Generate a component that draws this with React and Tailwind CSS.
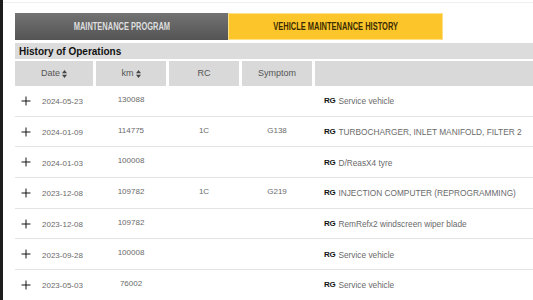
import { Plus } from "lucide-react";

const rows = [
  { date: "2024-05-23", km: "130088", rc: "", symptom: "", desc: "Service vehicle" },
  { date: "2024-01-09", km: "114775", rc: "1C", symptom: "G138", desc: "TURBOCHARGER, INLET MANIFOLD, FILTER 2" },
  { date: "2024-01-03", km: "100008", rc: "", symptom: "", desc: "D/ReasX4 tyre" },
  { date: "2023-12-08", km: "109782", rc: "1C", symptom: "G219", desc: "INJECTION COMPUTER (REPROGRAMMING)" },
  { date: "2023-12-08", km: "109782", rc: "", symptom: "", desc: "RemRefx2 windscreen wiper blade" },
  { date: "2023-09-28", km: "100008", rc: "", symptom: "", desc: "Service vehicle" },
  { date: "2023-05-03", km: "76002", rc: "", symptom: "", desc: "Service vehicle" },
];

function SortIcon() {
  return (
    <svg width="5" height="8" viewBox="0 0 5 8" className="ml-[2px] inline-block">
      <path d="M2.5 0 L5 3.2 L0 3.2 Z" fill="#444" />
      <path d="M2.5 8 L5 4.8 L0 4.8 Z" fill="#444" />
    </svg>
  );
}

export default function App() {
  return (
    <div className="min-h-[300px] w-[533px] overflow-hidden bg-white border-l-[3px] border-[#1c1c1c] font-['Liberation_Sans',Arial,sans-serif]">
      <div className="h-[3px] border-b border-[#efefef]" />

      {/* Tabs */}
      <div className="mt-[10px] flex pl-[12px]">
        <div className="flex h-[27px] w-[213px] items-center justify-center bg-gradient-to-b from-[#737373] to-[#545454] text-[11px] font-bold text-[#dedede]">
          <span className="inline-block scale-x-[0.68] whitespace-nowrap">MAINTENANCE PROGRAM</span>
        </div>
        <div className="flex h-[27px] w-[215px] items-center justify-center border border-[#fde08a] bg-[#fcc62b] text-[11px] font-bold text-[#3b2c00]">
          <span className="inline-block scale-x-[0.68] whitespace-nowrap">VEHICLE MAINTENANCE HISTORY</span>
        </div>
      </div>

      {/* Section title */}
      <div className="mt-[3px] ml-[12px] flex h-[16px] items-center bg-[#dcdcdc] pl-[4px] text-[10px] font-bold text-[#111]">
        History of Operations
      </div>

      {/* Table */}
      <div className="ml-[12px] mt-[2px]">
        <div className="grid h-[25px] grid-cols-[78px_70px_70px_70px_1fr] gap-x-[3px] text-[9px] text-[#555]">
          <div className="flex items-center justify-center bg-[#d9d9d9]">
            Date<SortIcon />
          </div>
          <div className="flex items-center justify-center bg-[#d9d9d9]">
            km<SortIcon />
          </div>
          <div className="flex items-center justify-center bg-[#d9d9d9]">RC</div>
          <div className="flex items-center justify-center bg-[#d9d9d9]">Symptom</div>
          <div className="bg-[#d9d9d9]" />
        </div>

        {rows.map((r, i) => (
          <div
            key={i}
            className="grid h-[30.7px] grid-cols-[78px_70px_70px_70px_1fr] gap-x-[3px] border-b border-[#e4e4e4] text-[8px] text-[#6a6a6a]"
          >
            <div className="flex items-center pl-[4px]">
              <Plus className="h-[14px] w-[14px] text-[#111]" strokeWidth={1.7} />
              <span className="ml-[9px] pt-[3px]">{r.date}</span>
            </div>
            <div className="flex items-center justify-center pb-[2px]">{r.km}</div>
            <div className="flex items-center justify-center pb-[2px]">{r.rc}</div>
            <div className="flex items-center justify-center pb-[2px]">{r.symptom}</div>
            <div className="flex items-center pl-[9px] pt-[1px] text-[8.3px]">
              <span className="mr-[3px] text-[8px] font-bold tracking-[-0.3px] text-[#111]">RG</span>
              <span>{r.desc}</span>
            </div>
          </div>
        ))}
      </div>
    </div>
  );
}
